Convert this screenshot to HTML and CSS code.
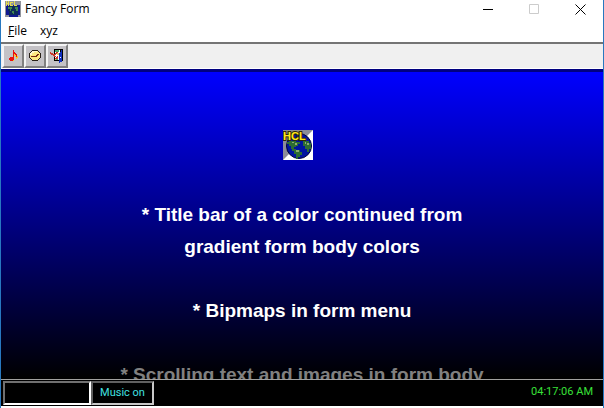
FILE: index.html
```html
<!DOCTYPE html>
<html lang="en">
<head>
<meta charset="utf-8">
<title>Fancy Form</title>
<link rel="stylesheet" href="styles.css">
</head>
<body>
<svg class="defs" aria-hidden="true">
  <symbol id="globe" viewBox="0 0 30 30">
    <path fill="#fff" d="M0 0h30v30H0z"/>
    <path fill="#8c8c98" d="M0 0h30L0 30z"/>
    <circle cx="16" cy="16" r="12.500" fill="#0014a0" stroke="#000038"/>
    <path fill="#2c6c34" d="M4 12h2v-1h7v1h4v2h-2v2h-2v1h-2v2h2v1h4v2h2v3h-2v2h-2v2h-2v-5h-2v-3h-2v-2H8v-3H6v-2H4zM20 10h3v1h3v2h2v6h-2v3h-2v-3h-2v-3h-2z"/>
    <path fill="#8cac70" d="M9 12h2v1H9zM12 13h2v2h-2zM13 20h3v2h-3zM24 13h2v2h-2zM22 12h1v2h-1z"/>
    <text class="globe-text" x="0" y="10">HCL</text>
  </symbol>
</svg>
<main class="window">
  <header class="titlebar">
    <svg class="app-icon" role="img" aria-label="HCL" viewBox="0 0 16 16">
      <path fill="#90949c" d="M0 0h16v16H0z"/>
      <path fill="#101890" d="M1 4h14v10h-2v2H4v-2H1z"/>
      <path fill="#0c2c58" d="M3 5h10v9H4z"/>
      <path fill="#408850" d="M3 6h4v2H6v2H5V8H3zM7 10h2v3H8v-1H7zM10 6h3v4h-2V8h-1z"/>
      <path fill="#e4dc50" d="M1 0h1v2h1V0h1v5H3V3H2v2H1zM5 1h3v1H6v2h2v1H5zM9 0h1v4h2v1H9z"/>
    </svg>
    <h1 class="title">Fancy Form</h1>
    <div class="controls">
      <button class="control" aria-label="Minimize"><svg viewBox="0 0 11 11"><path d="M0 5.5h10"/></svg></button>
      <button class="control" aria-label="Maximize" disabled><svg viewBox="0 0 11 11"><path d="M.5.5h9v9h-9z"/></svg></button>
      <button class="control" aria-label="Close"><svg viewBox="0 0 11 11"><path d="M.5.5l10 10M10.500.5l-10 10"/></svg></button>
    </div>
  </header>
  <nav class="menu">
    <button class="menu-item"><u>F</u>ile</button>
    <button class="menu-item">xyz</button>
  </nav>
  <div class="toolbar">
    <button class="tool" aria-label="Music">
      <svg viewBox="0 0 16 16"><path fill="#ffc820" d="M9 5h1v1h1v1h1v1h1v2h-1v1h-1V9h-1V8H9zM8 11h1v2H7v-1h1z"/><path fill="#e81010" d="M8 2h1v2h1v1h1v1h1v3h-1V7h-1V6H9v6H8v1H5v-1H4v-2h1V9h3z"/></svg>
    </button>
    <button class="tool" aria-label="Clock">
      <svg viewBox="0 0 16 16"><path fill="#282018" d="M5 2h6v1h1v1h1v1h1v5h-1v1h-1v1h-1v1H5v-1H4v-1H3v-1H2V5h1V4h1V3h1z"/><path fill="#fce880" d="M5 3h6v1h1v1h1v5h-1v1h-1v1H5v-1H4v-1H3V5h1V4h1z"/><path fill="#fff8d0" d="M5 3h5v1H5zM4 4h3v1H4zM3 5h2v2H3z"/><path fill="#782810" d="M4 8h5V7h1V6h2v1h-1v1h-1v1H4z"/></svg>
    </button>
    <button class="tool" aria-label="Exit">
      <svg viewBox="0 0 16 16"><path fill="#000" d="M5 1h9v12H5z"/><path fill="#fff" d="M6 2h5v10H6z"/><path fill="#48a868" d="M6 2h4v2H6zM7 9h2v3H7z"/><path fill="#e8c860" d="M8 5h2v2H8zM6 10h1v2H6z"/><path fill="#1030c0" d="M13 2v12h-2v1h-1V5h1V4h1V2z"/><path fill="#c83828" d="M1 4h1v1h2v1h2V5h1V4h2v1H8v1H7v1H6v1h1v1h1V8h1v3H6v-1h1V9H5V8H4V7H2V6H1z"/><path fill="#fff" d="M11 9h1v1h-1z"/></svg>
    </button>
  </div>
  <section class="canvas">
    <svg class="logo" role="img" aria-label="HCL"><use href="#globe"/></svg>
    <p class="line">* Title bar of a color continued from<br>gradient form body colors</p>
    <p class="line">* Bipmaps in form menu</p>
    <p class="line faded">* Scrolling text and images in form body</p>
  </section>
  <footer class="status">
    <div class="panel blank"></div>
    <button class="panel music">Music on</button>
    <time class="clock">04:17:06 AM</time>
  </footer>
</main>
</body>
</html>
```

FILE: styles.css
```css
* { box-sizing: border-box; }
body {
  margin: 0;
  background: #fff;
  color: #000;
  font: 12px/16px "Open Sans", "Noto Sans", sans-serif;
}
button {
  margin: 0;
  padding: 0;
  border: 0;
  background: none;
  color: inherit;
  font: inherit;
}
.defs { position: absolute; width: 0; height: 0; }
.window {
  display: flex;
  flex-direction: column;
  height: 100vh;
  padding-bottom: 2px;
  border: solid #2878c0;
  border-width: 0 1px;
}
.titlebar {
  display: flex;
  align-items: center;
  height: 18px;
  padding-left: 4px;
}
.app-icon { width: 16px; height: 16px; shape-rendering: crispEdges; }
.title {
  flex: 1;
  margin: 0 0 0 4px;
  font-size: 12px;
  font-weight: 400;
}
.controls { display: flex; }
.control {
  display: grid;
  place-items: center;
  width: 46px;
  height: 18px;
}
.control svg { width: 11px; height: 11px; fill: none; stroke: #000; }
.control:disabled svg { stroke: #ccc; }
.menu {
  display: flex;
  gap: 13px;
  height: 24px;
  padding: 2px 7px 0;
}
.menu-item { height: 22px; }
.toolbar {
  display: flex;
  height: 27px;
  padding-left: 1px;
  background: #f0f0f0;
  border-top: 2px solid #747474;
  border-bottom: 1px solid #fff;
}
.tool {
  display: grid;
  place-items: center;
  width: 22px;
  height: 24px;
  background: #c4c2c6;
  border: 2px solid;
  border-color: #f4f4f4 #808080 #808080 #f4f4f4;
}
.tool svg { width: 16px; height: 16px; shape-rendering: crispEdges; }
.canvas {
  flex: 1;
  min-height: 0;
  overflow: hidden;
  padding-top: 58px;
  border-top: 3px solid #000080;
  background: linear-gradient(#0000ff, #000);
  color: #fff;
  text-align: center;
  font: bold 19px/32px "Liberation Sans", Arial, sans-serif;
}
.logo {
  display: block;
  box-sizing: content-box;
  width: 30px;
  height: 30px;
  margin: 0 auto 39px;
  padding-right: 8px;
}
.globe-text {
  font: bold 11px "Liberation Sans", Arial, sans-serif;
  fill: #ffe820;
  stroke: #302800;
  stroke-width: 2px;
  paint-order: stroke;
}
.line { margin: 0 0 32px; }
.faded { color: #808080; }
.status {
  display: flex;
  align-items: stretch;
  height: 27px;
  padding: 0 0 1px 2px;
  border-top: 1px solid #a0a0a0;
  background: #000;
  font: 11px/16px Roboto, sans-serif;
}
.panel {
  border: 2px solid;
  border-color: #707070 #fff #fff #707070;
  margin-top: 1px;
}
.blank { width: 88px; }
.music { width: 63px; border-color: #606060 #c8c8c8 #c8c8c8 #606060; color: #40e0e0; }
.clock {
  margin-left: auto;
  padding: 4px 10px 0 0;
  color: #38e038;
}
```
